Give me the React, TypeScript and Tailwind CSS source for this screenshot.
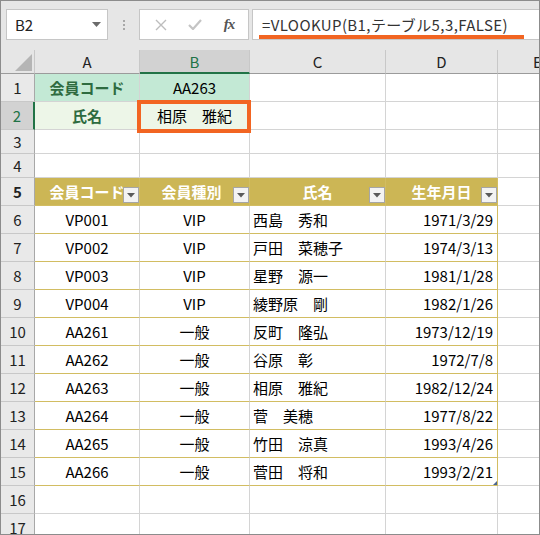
import React from "react";

const rows: [string, string, string, string][] = [
  ["VP001", "VIP", "西島　秀和", "1971/3/29"],
  ["VP002", "VIP", "戸田　菜穂子", "1974/3/13"],
  ["VP003", "VIP", "星野　源一", "1981/1/28"],
  ["VP004", "VIP", "綾野原　剛", "1982/1/26"],
  ["AA261", "一般", "反町　隆弘", "1973/12/19"],
  ["AA262", "一般", "谷原　彰", "1972/7/8"],
  ["AA263", "一般", "相原　雅紀", "1982/12/24"],
  ["AA264", "一般", "菅　美穂", "1977/8/22"],
  ["AA265", "一般", "竹田　涼真", "1993/4/26"],
  ["AA266", "一般", "菅田　将和", "1993/2/21"],
];

function RowHead({ n, selected }: { n: number; selected?: boolean }) {
  return (
    <div
      className={
        selected
          ? "w-[34px] shrink-0 flex items-center justify-center border-b border-r-2 border-b-[#c8c8c8] border-r-[#217346] bg-[#d2d2d2] text-[#217346] text-[15px]"
          : "w-[34px] shrink-0 flex items-center justify-center border-b border-r border-b-[#c8c8c8] border-r-[#a8a8a8] bg-[#e9e9e9] text-[#222] text-[15px]"
      }
    >
      {n}
    </div>
  );
}

function FilterBtn() {
  return (
    <div className="absolute right-0 bottom-[2px] w-[16px] h-[16px] border border-[#a6a6a6] bg-[#f3f3f3] flex items-center justify-center">
      <svg width="8" height="5" viewBox="0 0 8 5">
        <path d="M0 0 L8 0 L4 4.5 Z" fill="#5a5a5a" />
      </svg>
    </div>
  );
}

function EmptyRow({ n, h }: { n: number; h: string }) {
  return (
    <div className={"flex " + h}>
      <RowHead n={n} />
      <div className="w-[105px] shrink-0 border-r border-b border-[#d4d4d4]" />
      <div className="w-[110px] shrink-0 border-r border-b border-[#d4d4d4]" />
      <div className="w-[136px] shrink-0 border-r border-b border-[#d4d4d4]" />
      <div className="w-[112px] shrink-0 border-r border-b border-[#d4d4d4]" />
      <div className="flex-1 border-b border-[#d4d4d4]" />
    </div>
  );
}

export default function App() {
  return (
    <div className="w-[540px] h-[535px] border border-[#8c8c8c] bg-white overflow-hidden font-['Noto_Sans_CJK_JP',sans-serif] text-black leading-none">
      {/* Top bar */}
      <div className="h-[49px] bg-[#e6e6e6] flex items-start pt-[8px] pl-[5px]">
        <div className="w-[102px] h-[31px] border border-[#c6c6c6] bg-white flex items-center justify-between pl-[8px] pr-[6px]">
          <span className="text-[15px] text-[#222]">B2</span>
          <svg width="9" height="5" viewBox="0 0 9 5">
            <path d="M0 0 L9 0 L4.5 5 Z" fill="#6b6b6b" />
          </svg>
        </div>
        <div className="w-[31px] h-[31px] flex flex-col items-center justify-center gap-[2px]">
          <div className="w-[2px] h-[2px] bg-[#a8a8a8]" />
          <div className="w-[2px] h-[2px] bg-[#a8a8a8]" />
          <div className="w-[2px] h-[2px] bg-[#a8a8a8]" />
        </div>
        <div className="w-[110px] h-[31px] border border-[#c6c6c6] bg-white flex items-center">
          <div className="w-[38px] flex justify-center pl-[3px]">
            <svg width="12" height="12" viewBox="0 0 12 12">
              <path d="M1 1 L11 11 M11 1 L1 11" stroke="#bdbdbd" strokeWidth="1.4" />
            </svg>
          </div>
          <div className="w-[34px] flex justify-center">
            <svg width="14" height="11" viewBox="0 0 14 11">
              <path d="M1 6 L5 10 L13 1" stroke="#c4c4c4" strokeWidth="2.2" fill="none" />
            </svg>
          </div>
          <div className="flex-1 flex justify-center pr-[2px]">
            <span className="font-['Liberation_Serif',serif] italic font-bold text-[15px] text-[#555] tracking-[-1px]">fx</span>
          </div>
        </div>
        <div className="ml-[3px] flex-1 h-[31px] border-y border-l border-[#c6c6c6] bg-white flex items-center pl-[9px] relative">
          <span className="text-[15px] text-[#333] whitespace-nowrap tracking-[0.4px]">=VLOOKUP(B1,テーブル5,3,FALSE)</span>
          <div className="absolute left-[6px] w-[265px] bottom-[0px] h-[4px] bg-[#f26522]" />
        </div>
      </div>

      {/* Column headers */}
      <div className="flex h-[24px] bg-[#e6e6e6] text-[15px]">
        <div className="w-[34px] shrink-0 border-r border-b border-r-[#c8c8c8] border-b-[#9b9b9b] flex items-end justify-end pr-[2px] pb-[2px]">
          <svg width="17" height="17" viewBox="0 0 17 17">
            <path d="M17 0 L17 17 L0 17 Z" fill="#b5b5b5" />
          </svg>
        </div>
        <div className="w-[105px] shrink-0 border-r border-b border-r-[#c8c8c8] border-b-[#9b9b9b] flex items-center justify-center text-[#222]">A</div>
        <div className="w-[110px] shrink-0 border-r border-b-2 border-r-[#c8c8c8] border-b-[#217346] bg-[#d2d2d2] flex items-center justify-center text-[#217346]">B</div>
        <div className="w-[136px] shrink-0 border-r border-b border-r-[#c8c8c8] border-b-[#9b9b9b] flex items-center justify-center text-[#222]">C</div>
        <div className="w-[112px] shrink-0 border-r border-b border-r-[#c8c8c8] border-b-[#9b9b9b] flex items-center justify-center text-[#222]">D</div>
        <div className="flex-1 border-b border-b-[#9b9b9b] flex items-center pl-[35px] overflow-hidden text-[#222]">E</div>
      </div>

      {/* Row 1 */}
      <div className="flex h-[28px] text-[15px]">
        <RowHead n={1} />
        <div className="w-[105px] shrink-0 border-r border-b border-[#d4d4d4] bg-[#c3e9d5] flex items-center justify-center font-bold text-[#2e6b40]">会員コード</div>
        <div className="w-[110px] shrink-0 border-r border-b border-[#d4d4d4] bg-[#c3e9d5] flex items-center justify-center">AA263</div>
        <div className="w-[136px] shrink-0 border-r border-b border-[#d4d4d4]" />
        <div className="w-[112px] shrink-0 border-r border-b border-[#d4d4d4]" />
        <div className="flex-1 border-b border-[#d4d4d4]" />
      </div>

      {/* Row 2 */}
      <div className="flex h-[28px] text-[15px]">
        <RowHead n={2} selected />
        <div className="w-[105px] shrink-0 border-r border-b border-[#d4d4d4] bg-[#edf6e8] flex items-center justify-center font-bold text-[#2e6b40]">氏名</div>
        <div className="w-[110px] shrink-0 border-r border-b border-[#d4d4d4] bg-[#edf6e8] flex items-center justify-center relative">
          相原　雅紀
          <div className="absolute -left-[3px] -right-[2px] -top-[2px] -bottom-[4px] border-4 border-[#f26522] z-10" />
        </div>
        <div className="w-[136px] shrink-0 border-r border-b border-[#d4d4d4]" />
        <div className="w-[112px] shrink-0 border-r border-b border-[#d4d4d4]" />
        <div className="flex-1 border-b border-[#d4d4d4]" />
      </div>

      <EmptyRow n={3} h="h-[24px]" />
      <EmptyRow n={4} h="h-[24px]" />

      {/* Row 5 table header */}
      <div className="flex h-[28px] text-[15px] font-bold text-white">
        <RowHead n={5} />
        <div className="w-[105px] shrink-0 border-r border-b border-r-[#d2bd62] border-b-[#d2bd62] bg-[#ccb655] flex items-center justify-center relative">
          会員コード
          <FilterBtn />
        </div>
        <div className="w-[110px] shrink-0 border-r border-b border-r-[#d2bd62] border-b-[#d2bd62] bg-[#ccb655] flex items-center justify-center relative pr-[6px]">
          会員種別
          <FilterBtn />
        </div>
        <div className="w-[136px] shrink-0 border-r border-b border-r-[#d2bd62] border-b-[#d2bd62] bg-[#ccb655] flex items-center justify-center relative">
          氏名
          <FilterBtn />
        </div>
        <div className="w-[112px] shrink-0 border-r border-b border-r-[#d2bd62] border-b-[#d2bd62] bg-[#ccb655] flex items-center justify-center relative">
          生年月日
          <FilterBtn />
        </div>
        <div className="flex-1 border-b border-[#d4d4d4]" />
      </div>

      {rows.map((r, i) => (
        <div key={i} className="flex h-[28px] text-[15px]">
          <RowHead n={i + 6} />
          <div className="w-[105px] shrink-0 border-r border-b border-r-[#d4d4d4] border-b-[#d2bd62] flex items-center justify-center">{r[0]}</div>
          <div className="w-[110px] shrink-0 border-r border-b border-r-[#d4d4d4] border-b-[#d2bd62] flex items-center justify-center">{r[1]}</div>
          <div className="w-[136px] shrink-0 border-r border-b border-r-[#d4d4d4] border-b-[#d2bd62] flex items-center pl-[3px] whitespace-nowrap">{r[2]}</div>
          <div className="w-[112px] shrink-0 border-r border-b border-r-[#d2bd62] border-b-[#d2bd62] flex items-center justify-end pr-[4px] relative">
            {r[3]}
            {i === rows.length - 1 && (
              <svg className="absolute right-0 bottom-0" width="4" height="4" viewBox="0 0 4 4">
                <path d="M4 0 L4 4 L0 4 Z" fill="#4a6590" />
              </svg>
            )}
          </div>
          <div className="flex-1 border-b border-[#d4d4d4]" />
        </div>
      ))}

      <EmptyRow n={16} h="h-[28px]" />
      <EmptyRow n={17} h="h-[28px]" />
    </div>
  );
}
